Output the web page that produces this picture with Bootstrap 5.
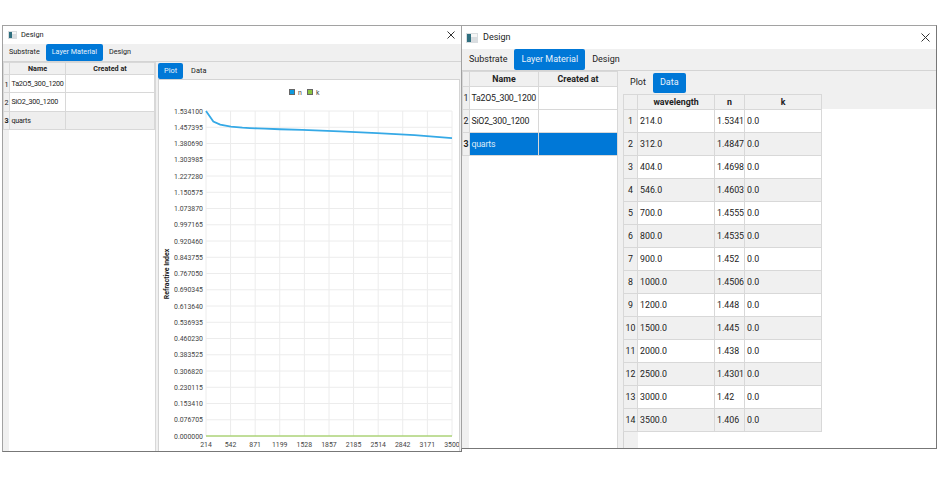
<!DOCTYPE html>
<html lang="en">
<head>
  <meta charset="UTF-8">
  <meta name="viewport" content="width=device-width, initial-scale=1.0">
  <title>Design</title>
  <link href="https://cdn.jsdelivr.net/npm/bootstrap@5.3.2/dist/css/bootstrap.min.css" rel="stylesheet">
  <style>
    body { background: #fff; font-family: Roboto, "Open Sans", sans-serif; color: #222; overflow: hidden; }
    .desk { padding: 25px 0 0 2px; height: 483px; }
    .win { background: #fff; border: 1px solid #a2a2a2; border-bottom-color: #777; border-right-color: #777; display: flex; flex-direction: column; }
    .win-a { width: 460px; height: 427px; font-size: 7.2px; }
    .win-b { width: 476px; height: 424px; font-size: 9px; margin-left: -1px; }
    .titlebar { display: flex; align-items: center; background: #fff; flex: none; }
    .win-a .titlebar { height: 18px; font-size: 7.4px; gap: 4px; padding: 0 6px 0 5px; }
    .win-b .titlebar { height: 23px; font-size: 9px; gap: 5px; padding: 0 6px 0 4px; }
    .tabstrip { background: #f0f0f0; border-bottom: 1px solid #d4d4d4; flex-wrap: nowrap; flex: none; }
    .win-a .tabstrip { height: 18px; }
    .win-b .tabstrip { height: 22px; }
    .tabstrip .nav-link, .subtabs .nav-link { color: #222; border-radius: 2px; height: 100%; display: flex; align-items: center; font-size: inherit; }
    .win-a .tabstrip .nav-link { padding: 0 6px; }
    .win-b .tabstrip .nav-link { padding: 0 7px; }
    .tabstrip .nav-link.active, .subtabs .nav-link.active { background: #0078d7; color: #e8f2fb; }
    .bodyrow { flex: 1; display: flex; min-height: 0; background: #f0f0f0; }
    .left-pane { background: #fff; position: relative; flex: none; border-right: 1px solid #d8d8d8; }
    .win-a .left-pane { width: 153px; }
    .win-b .left-pane { width: 156px; }
    .left-pane::before { content: ""; position: absolute; left: 0; top: 0; bottom: 0; background: #f0f0f0; }
    .win-a .left-pane::before { width: 6px; }
    .win-b .left-pane::before { width: 7px; }
    .grid-tbl { position: relative; table-layout: fixed; border-collapse: collapse; margin: 0; line-height: 1; }
    .grid-tbl th, .grid-tbl td { padding: 1px 0 0 2px; border: 1px solid #d8d8d8; white-space: nowrap; overflow: hidden; vertical-align: middle; background: #fff; color: #222; font-weight: 400; }
    .left-pane .grid-tbl td { padding-left: 1.5px; letter-spacing: -0.25px; }
    .win-a .left-pane .grid-tbl td { padding-top: 0; }
    .grid-tbl thead th { background: #f0f0f0; font-weight: 700; text-align: center; padding: 1px 0 0; }
    .grid-tbl tbody th { background: #f0f0f0; text-align: center; padding: 1px 0 0; }
    .grid-tbl tr.pick-gray td { background: #eeeeee; }
    .grid-tbl tr.pick-blue td { background: #0078d7; color: #dcebf8; }
    .grid-tbl tr.pick-gray th, .grid-tbl tr.pick-blue th { font-weight: 700; }
    .grid-tbl tr.alt td { background: #f0f0f0; }
    .win-a .grid-tbl { width: 151px; font-size: 7.2px; }
    .win-b .grid-tbl { font-size: 8.8px; }
    .win-b .left-pane .grid-tbl { width: 155px; }
    .data-box .grid-tbl { width: 198px; }
    .win-a .grid-tbl thead tr { height: 12px; }
    .win-a .grid-tbl tbody tr { height: 18.4px; }
    .win-b .grid-tbl thead tr { height: 15px; }
    .win-b .grid-tbl tbody tr { height: 23px; }
    .right-pane { flex: 1; min-width: 0; display: flex; flex-direction: column; }
    .win-a .right-pane { padding: 1px 1px 0 2px; }
    .win-b .right-pane { padding: 2px 0 0 5px; }
    .subtabs { flex-wrap: nowrap; flex: none; }
    .win-a .subtabs { height: 16px; gap: 2px; }
    .win-b .subtabs { height: 20px; }
    .win-a .subtabs .nav-link { padding: 0 6px; font-size: 7.4px; }
    .win-b .subtabs .nav-link { padding: 0 7px; }
    .plot-box { flex: 1; background: #fff; border: 1px solid #d4d4d4; border-bottom: 0; min-height: 0; }
    .plot-box svg { display: block; }
    .plot-box text { font-family: Roboto, "Open Sans", sans-serif; font-size: 6.9px; fill: #444; }
    .plot-box text.axis-name { font-weight: 700; fill: #222; }
    .data-box { flex: 1; margin-top: 1px; background: #fff; border-left: 1px solid #d4d4d4; position: relative; min-height: 0; }
    .data-box::before { content: ""; position: absolute; left: 0; top: 0; bottom: 0; width: 14px; background: #f0f0f0; }
    .data-box::after { content: ""; position: absolute; left: 0; right: 0; top: 0; height: 15px; background: #f0f0f0; }
    .data-box .grid-tbl { z-index: 1; margin-left: -1px; }
  </style>
</head>
<body>
  <div class="desk d-flex align-items-start">

    <div class="win win-a">
      <div class="titlebar">
        <svg width="9" height="8" viewBox="0 0 9 8"><rect width="9" height="8" fill="#d9dde0"/><rect x="1" y="1" width="3" height="6" fill="#2f6f7f"/><rect x="4" y="1" width="4" height="2" fill="#f6f6f6"/></svg>
        <span>Design</span>
        <svg class="ms-auto" width="8" height="8" viewBox="0 0 8 8"><path d="M.5.5l7 7M7.5.5l-7 7" stroke="#333" fill="none"/></svg>
      </div>
      <ul class="nav tabstrip">
        <li class="nav-item"><a class="nav-link" href="#">Substrate</a></li>
        <li class="nav-item"><a class="nav-link active" href="#">Layer Material</a></li>
        <li class="nav-item"><a class="nav-link" href="#">Design</a></li>
      </ul>
      <div class="bodyrow">
        <div class="left-pane">
          <table class="table grid-tbl">
            <colgroup><col style="width:6px"><col style="width:56px"><col style="width:89px"></colgroup>
            <thead><tr><th></th><th>Name</th><th>Created at</th></tr></thead>
            <tbody>
              <tr><th>1</th><td>Ta2O5_300_1200</td><td></td></tr>
              <tr><th>2</th><td>SiO2_300_1200</td><td></td></tr>
              <tr class="pick-gray"><th>3</th><td>quarts</td><td></td></tr>
            </tbody>
          </table>
        </div>
        <div class="right-pane">
          <ul class="nav subtabs">
            <li class="nav-item"><a class="nav-link active" href="#">Plot</a></li>
            <li class="nav-item"><a class="nav-link" href="#">Data</a></li>
          </ul>
          <div class="plot-box"><svg id="chart" width="300" height="370"></svg></div>
        </div>
      </div>
    </div>

    <div class="win win-b">
      <div class="titlebar">
        <svg width="12" height="10" viewBox="0 0 12 10"><rect width="12" height="10" fill="#d9dde0"/><rect x="1" y="1" width="4" height="8" fill="#2f6f7f"/><rect x="5" y="1" width="6" height="3" fill="#f6f6f6"/></svg>
        <span>Design</span>
        <svg class="ms-auto" width="9" height="9" viewBox="0 0 9 9"><path d="M.5.5l8 8M8.5.5l-8 8" stroke="#333" fill="none"/></svg>
      </div>
      <ul class="nav tabstrip">
        <li class="nav-item"><a class="nav-link" href="#">Substrate</a></li>
        <li class="nav-item"><a class="nav-link active" href="#">Layer Material</a></li>
        <li class="nav-item"><a class="nav-link" href="#">Design</a></li>
      </ul>
      <div class="bodyrow">
        <div class="left-pane">
          <table class="table grid-tbl">
            <colgroup><col style="width:7px"><col style="width:69px"><col style="width:79px"></colgroup>
            <thead><tr><th></th><th>Name</th><th>Created at</th></tr></thead>
            <tbody>
              <tr><th>1</th><td>Ta2O5_300_1200</td><td></td></tr>
              <tr><th>2</th><td>SiO2_300_1200</td><td></td></tr>
              <tr class="pick-blue"><th>3</th><td>quarts</td><td></td></tr>
            </tbody>
          </table>
        </div>
        <div class="right-pane">
          <ul class="nav subtabs">
            <li class="nav-item"><a class="nav-link" href="#">Plot</a></li>
            <li class="nav-item"><a class="nav-link active" href="#">Data</a></li>
          </ul>
          <div class="data-box">
            <table class="table grid-tbl">
              <colgroup><col style="width:14px"><col style="width:77px"><col style="width:30px"><col style="width:77px"></colgroup>
              <thead><tr><th></th><th>wavelength</th><th>n</th><th>k</th></tr></thead>
              <tbody id="rows"></tbody>
            </table>
          </div>
        </div>
      </div>
    </div>

  </div>
  <script src="https://cdn.jsdelivr.net/npm/bootstrap@5.3.2/dist/js/bootstrap.bundle.min.js"></script>
  <script>
    var data = [[214,1.5341],[312,1.4847],[404,1.4698],[546,1.4603],[700,1.4555],[800,1.4535],[900,1.452],[1000,1.4506],[1200,1.448],[1500,1.445],[2000,1.438],[2500,1.4301],[3000,1.42],[3500,1.406]];

    var rows = '';
    data.forEach(function (d, i) {
      rows += '<tr' + (i % 2 ? ' class="alt"' : '') + '><th>' + (i + 1) + '</th><td>' + d[0].toFixed(1) + '</td><td>' + d[1] + '</td><td>0.0</td></tr>';
    });
    document.getElementById('rows').innerHTML = rows;

    // plot area inside the svg, which starts at about x=158, y=80 on the page
    var L = 47, R = 293, T = 31, B = 356;
    var xOf = function (v) { return L + (v - 214) / (3500 - 214) * (R - L); };
    var yOf = function (v) { return B - v / 1.5341 * (B - T); };
    var s = '';
    var xTicks = [214,542,871,1199,1528,1857,2185,2514,2842,3171,3500];
    xTicks.forEach(function (v) {
      var x = xOf(v);
      s += '<line x1="' + x + '" x2="' + x + '" y1="' + T + '" y2="' + B + '" stroke="#ececec"/>';
      s += '<text x="' + x + '" y="' + (B + 11) + '" text-anchor="middle">' + v + '</text>';
    });
    for (var i = 0; i <= 20; i++) {
      var val = 0.076705 * i, y = yOf(val);
      s += '<line x1="' + L + '" x2="' + R + '" y1="' + y + '" y2="' + y + '" stroke="#ececec"/>';
      s += '<text x="' + (L - 3) + '" y="' + (y + 2.5) + '" text-anchor="end">' + val.toFixed(6) + '</text>';
    }
    s += '<polyline fill="none" stroke="#35a9e6" stroke-width="1.8" points="' + data.map(function (d) { return xOf(d[0]) + ',' + yOf(d[1]); }).join(' ') + '"/>';
    s += '<line x1="' + L + '" x2="' + R + '" y1="' + B + '" y2="' + B + '" stroke="#8cc63f" stroke-width="1.2"/>';
    s += '<rect x="130.5" y="9.5" width="5" height="5" fill="#0e9ade" stroke="#666"/><text x="139" y="15">n</text>';
    s += '<rect x="148.5" y="9.5" width="5" height="5" fill="#8cc63f" stroke="#666"/><text x="157" y="15">k</text>';
    s += '<text class="axis-name" transform="translate(10 194) rotate(-90)" text-anchor="middle">Refractive Index</text>';
    document.getElementById('chart').innerHTML = s;
  </script>
</body>
</html>
